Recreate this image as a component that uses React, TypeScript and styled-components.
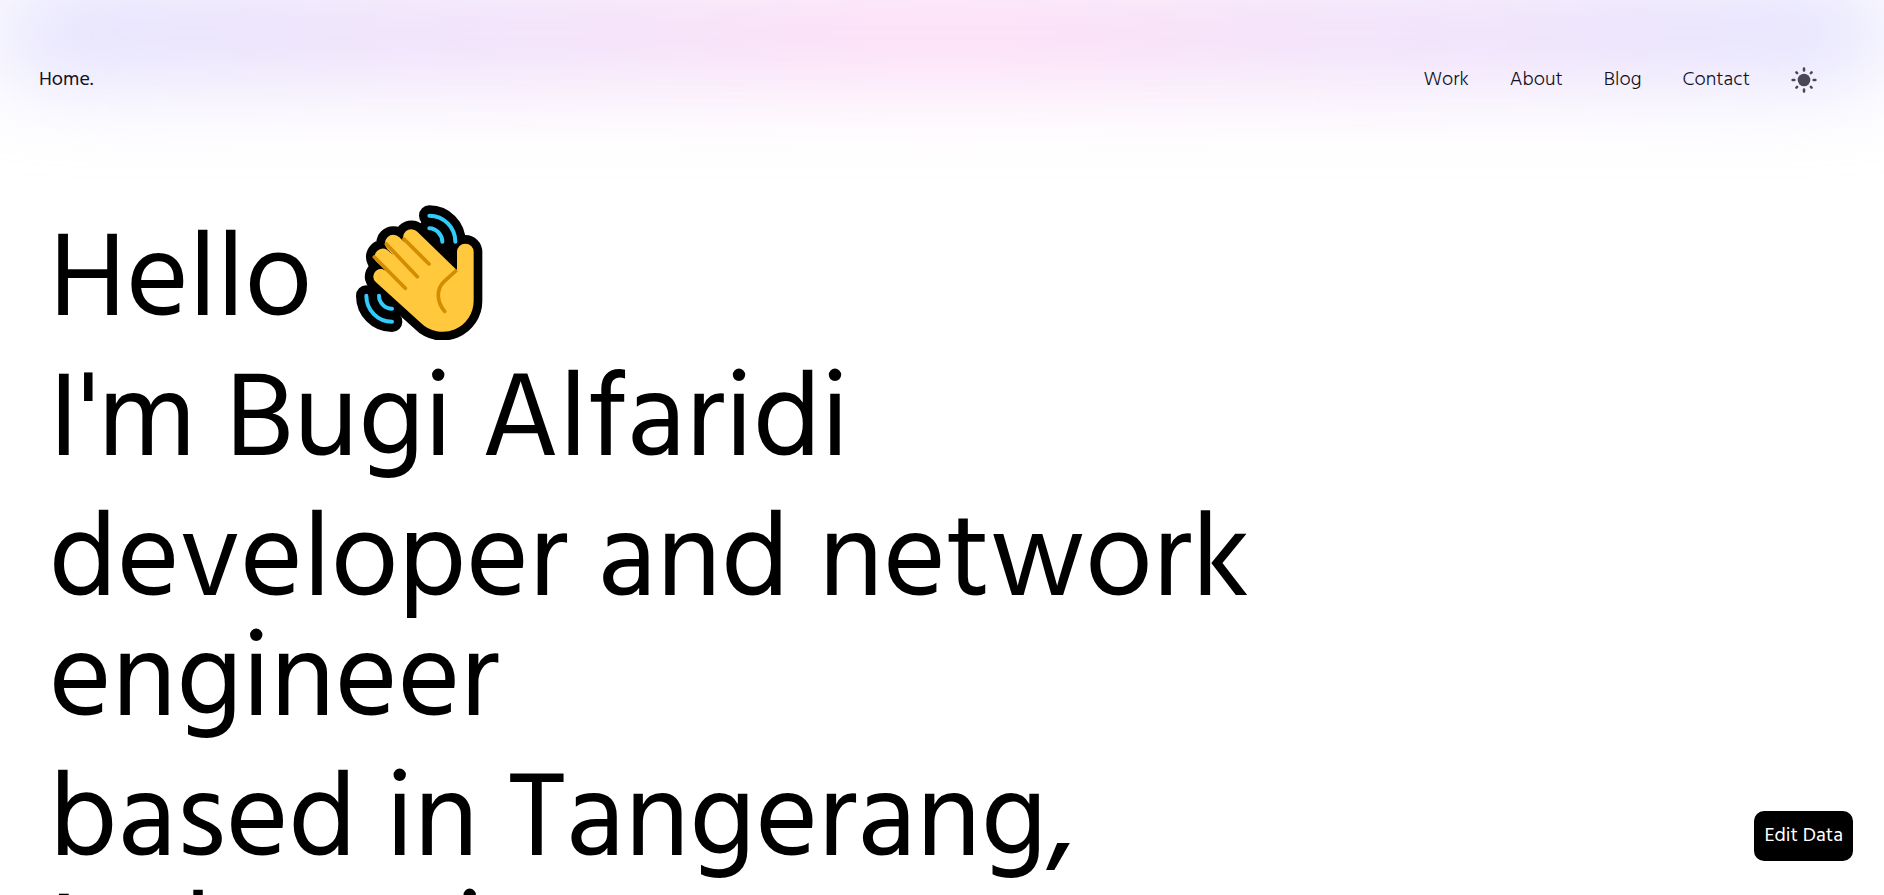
import React from "react";
import styled, { createGlobalStyle } from "styled-components";

const GlobalStyle = createGlobalStyle`
  * {
    box-sizing: border-box;
  }
  html {
    scrollbar-width: none;
  }
  body {
    margin: 0;
    background: #fff;
    color: #000;
    font-family: "Hind", "Noto Sans", sans-serif;
    font-size: 20px;
    line-height: 28px;
  }
`;

const Page = styled.div`
  position: relative;
  height: 100vh;
  overflow: hidden;
`;

const Glow = styled.div`
  position: absolute;
  top: 8px;
  left: 0;
  width: 100%;
  height: 50px;
  background: linear-gradient(90deg, #c3c2fc, #f9b4ec, #c3c2fc);
  filter: blur(50px);
`;

const Header = styled.header`
  position: relative;
  display: flex;
  align-items: center;
  justify-content: space-between;
  height: 28px;
  margin-top: 66px;
  padding: 0 67px 0 39px;
`;

const HomeLink = styled.a`
  color: #14101f;
  text-decoration: none;
`;

const Nav = styled.nav`
  display: flex;
  align-items: center;
  gap: 41px;
`;

const NavLink = styled.a`
  color: #14101f;
  font-weight: 300;
  text-decoration: none;
`;

const ThemeButton = styled.button`
  display: flex;
  padding: 0;
  border: 0;
  background: none;
  color: #4b4758;
  cursor: pointer;
`;

const Hero = styled.main`
  position: relative;
  display: flex;
  flex-direction: column;
  gap: 20px;
  width: 70%;
  padding: 131px 0 0 49px;
`;

const Line = styled.h1`
  display: flex;
  align-items: flex-end;
  gap: 44px;
  margin: 0;
  font-size: 120px;
  font-weight: 400;
  line-height: 120px;
`;

const Wave = styled.svg`
  width: 127px;
  height: 135px;
  margin: -20px 0 5px;
`;

const EditButton = styled.button`
  position: fixed;
  right: 31px;
  bottom: 34px;
  padding: 11px 10px;
  border: 0;
  border-radius: 10px;
  background: #000;
  color: #fff;
  font: inherit;
  white-space: nowrap;
  cursor: pointer;
`;

const handShape =
  "M351 241V186A25 25 0 0 1 401 186V332A93 93 0 0 1 242 398L108 277A23 23 0 0 1 126 237L140 243L107 213A25 25 0 0 1 141 179L160 196L142 177A25 25 0 0 1 178 142L205 168L196 160A25 25 0 0 1 232 125Z";
const motionLines =
  "M268 77C312 77 346 113 346 155M268 115C289 115 307 135 307 155M79 317C79 360 113 395 156 395M117 317C117 338 135 356 156 356";

function WavingHand() {
  return (
    <Wave viewBox="48 45 381 405" role="img" aria-label="Waving hand">
      <g strokeLinecap="round" strokeLinejoin="round" fill="none">
        <path d={motionLines} stroke="#000" strokeWidth="62" />
        <path d={handShape} fill="#000" stroke="#000" strokeWidth="52" />
        <path d={motionLines} stroke="#32cbfa" strokeWidth="12" />
        <path d={handShape} fill="#ffc83d" />
        <path
          d="M103 201L196 295M139 162L232 260M192 147L267 222M347 243L312 275C288 298 290 336 314 364"
          stroke="#d48c00"
          strokeWidth="11"
        />
      </g>
    </Wave>
  );
}

const rays = [0, 45, 90, 135, 180, 225, 270, 315];

function Sun() {
  return (
    <svg width="26" height="26" viewBox="0 0 26 26" aria-hidden="true">
      <circle cx="13" cy="13" r="6.3" fill="currentColor" />
      <g stroke="currentColor" strokeWidth="2.5" strokeLinecap="round">
        {rays.map((angle) => (
          <path
            key={angle}
            d={angle % 90 === 0 ? "M13 1.6V3.4" : "M13 2.2V3.3"}
            transform={`rotate(${angle} 13 13)`}
          />
        ))}
      </g>
    </svg>
  );
}

const links = ["Work", "About", "Blog", "Contact"];

export default function App() {
  return (
    <>
      <GlobalStyle />
      <Page>
        <Glow />
        <Header>
          <HomeLink href="#home">Home.</HomeLink>
          <Nav>
            {links.map((label) => (
              <NavLink key={label} href={`#${label.toLowerCase()}`}>
                {label}
              </NavLink>
            ))}
            <ThemeButton type="button" aria-label="Toggle theme">
              <Sun />
            </ThemeButton>
          </Nav>
        </Header>
        <Hero>
          <Line>
            Hello <WavingHand />
          </Line>
          <Line>I'm Bugi Alfaridi</Line>
          <Line>developer and network engineer</Line>
          <Line>based in Tangerang, Indonesia.</Line>
        </Hero>
        <EditButton type="button">Edit Data</EditButton>
      </Page>
    </>
  );
}
